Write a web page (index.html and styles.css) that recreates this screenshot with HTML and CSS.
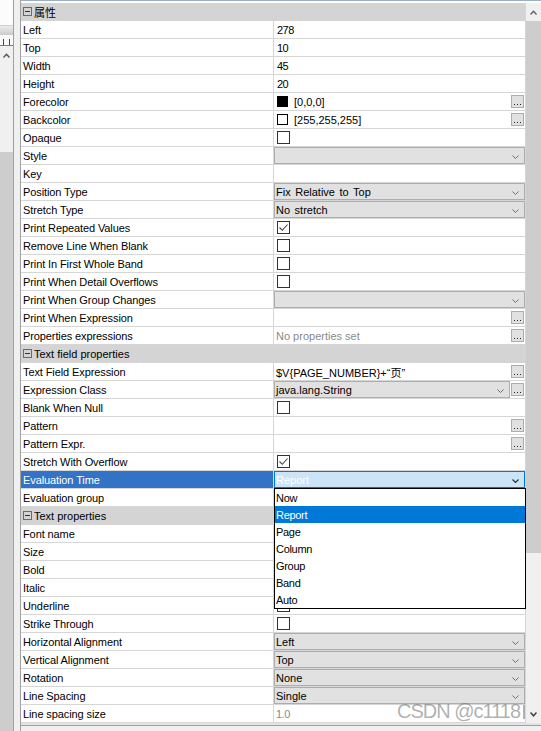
FILE: index.html
```html
<!DOCTYPE html>
<html>
<head>
<meta charset="utf-8">
<link rel="stylesheet" href="styles.css">
</head>
<body>
<div class="side">
  <div class="side-top"></div>
  <div class="side-band"></div>
  <div class="side-ruler"><span class="tick"></span><span class="tick"></span></div>
  <div class="side-arrow"><svg width="7" height="5" viewBox="0 0 7 5"><path d="M0.5 4.5 3.5 1.2 6.5 4.5" fill="none" stroke="#555" stroke-width="1.4"/></svg></div>
  <div class="side-thumb"></div>
</div>
<div class="split"></div>
<div class="panel">
  <div class="panel-top"></div>
  <div class="body-row">
    <div class="grid">
      <div class="row hdr"><span class="minus"></span><span class="cjk">属性</span></div>
      <div class="row"><div class="name">Left</div><div class="val"><span class="num">278</span></div></div>
      <div class="row"><div class="name">Top</div><div class="val"><span class="num">10</span></div></div>
      <div class="row"><div class="name">Width</div><div class="val"><span class="num">45</span></div></div>
      <div class="row"><div class="name">Height</div><div class="val"><span class="num">20</span></div></div>
      <div class="row"><div class="name">Forecolor</div><div class="val"><span class="sw black"></span><span class="swt">[0,0,0]</span><span class="btn"></span></div></div>
      <div class="row"><div class="name">Backcolor</div><div class="val"><span class="sw"></span><span class="swt">[255,255,255]</span><span class="btn"></span></div></div>
      <div class="row"><div class="name">Opaque</div><div class="val"><span class="cb"></span></div></div>
      <div class="row"><div class="name">Style</div><div class="val"><div class="combo"><span></span><svg class="chev" width="7" height="4" viewBox="0 0 7 4"><path d="M0.5 0.5 3.5 3.5 6.5 0.5" fill="none" stroke="#6d6d6d"/></svg></div></div></div>
      <div class="row"><div class="name">Key</div><div class="val"></div></div>
      <div class="row"><div class="name">Position Type</div><div class="val"><div class="combo"><span>Fix Relative to Top</span><svg class="chev" width="7" height="4" viewBox="0 0 7 4"><path d="M0.5 0.5 3.5 3.5 6.5 0.5" fill="none" stroke="#6d6d6d"/></svg></div></div></div>
      <div class="row"><div class="name">Stretch Type</div><div class="val"><div class="combo"><span>No stretch</span><svg class="chev" width="7" height="4" viewBox="0 0 7 4"><path d="M0.5 0.5 3.5 3.5 6.5 0.5" fill="none" stroke="#6d6d6d"/></svg></div></div></div>
      <div class="row"><div class="name">Print Repeated Values</div><div class="val"><span class="cb"><svg width="11" height="11" viewBox="0 0 11 11"><path d="M1.5 5.5 4.3 8.3 9.5 2.5" fill="none" stroke="#444" stroke-width="1.1"/></svg></span></div></div>
      <div class="row"><div class="name">Remove Line When Blank</div><div class="val"><span class="cb"></span></div></div>
      <div class="row"><div class="name">Print In First Whole Band</div><div class="val"><span class="cb"></span></div></div>
      <div class="row"><div class="name">Print When Detail Overflows</div><div class="val"><span class="cb"></span></div></div>
      <div class="row"><div class="name">Print When Group Changes</div><div class="val"><div class="combo"><span></span><svg class="chev" width="7" height="4" viewBox="0 0 7 4"><path d="M0.5 0.5 3.5 3.5 6.5 0.5" fill="none" stroke="#6d6d6d"/></svg></div></div></div>
      <div class="row"><div class="name">Print When Expression</div><div class="val"><span class="btn"></span></div></div>
      <div class="row"><div class="name">Properties expressions</div><div class="val"><span class="txt gray">No properties set</span><span class="btn"></span></div></div>
      <div class="row hdr"><span class="minus"></span><span>Text field properties</span></div>
      <div class="row"><div class="name">Text Field Expression</div><div class="val"><span class="txt cjkv">$V{PAGE_NUMBER}+“页”</span><span class="btn"></span></div></div>
      <div class="row"><div class="name">Expression Class</div><div class="val"><div class="combo short"><span class="plain">java.lang.String</span><svg class="chev" width="7" height="4" viewBox="0 0 7 4"><path d="M0.5 0.5 3.5 3.5 6.5 0.5" fill="none" stroke="#6d6d6d"/></svg></div><span class="btn"></span></div></div>
      <div class="row"><div class="name">Blank When Null</div><div class="val"><span class="cb"></span></div></div>
      <div class="row"><div class="name">Pattern</div><div class="val"><span class="btn"></span></div></div>
      <div class="row"><div class="name">Pattern Expr.</div><div class="val"><span class="btn"></span></div></div>
      <div class="row"><div class="name">Stretch With Overflow</div><div class="val"><span class="cb"><svg width="11" height="11" viewBox="0 0 11 11"><path d="M1.5 5.5 4.3 8.3 9.5 2.5" fill="none" stroke="#444" stroke-width="1.1"/></svg></span></div></div>
      <div class="row"><div class="name sel">Evaluation Time</div><div class="val"><div class="combo focus"><span class="plain">Report</span><svg class="chev" width="7" height="4" viewBox="0 0 7 4"><path d="M0.5 0.5 3.5 3.5 6.5 0.5" fill="none" stroke="#333" stroke-width="1.2"/></svg></div></div></div>
      <div class="row"><div class="name">Evaluation group</div><div class="val"></div></div>
      <div class="row hdr"><span class="minus"></span><span>Text properties</span></div>
      <div class="row"><div class="name">Font name</div><div class="val"></div></div>
      <div class="row"><div class="name">Size</div><div class="val"></div></div>
      <div class="row"><div class="name">Bold</div><div class="val"><span class="cb"></span></div></div>
      <div class="row"><div class="name">Italic</div><div class="val"><span class="cb"></span></div></div>
      <div class="row"><div class="name">Underline</div><div class="val"><span class="cb"></span></div></div>
      <div class="row"><div class="name">Strike Through</div><div class="val"><span class="cb"></span></div></div>
      <div class="row"><div class="name">Horizontal Alignment</div><div class="val"><div class="combo"><span>Left</span><svg class="chev" width="7" height="4" viewBox="0 0 7 4"><path d="M0.5 0.5 3.5 3.5 6.5 0.5" fill="none" stroke="#6d6d6d"/></svg></div></div></div>
      <div class="row"><div class="name">Vertical Alignment</div><div class="val"><div class="combo"><span>Top</span><svg class="chev" width="7" height="4" viewBox="0 0 7 4"><path d="M0.5 0.5 3.5 3.5 6.5 0.5" fill="none" stroke="#6d6d6d"/></svg></div></div></div>
      <div class="row"><div class="name">Rotation</div><div class="val"><div class="combo"><span>None</span><svg class="chev" width="7" height="4" viewBox="0 0 7 4"><path d="M0.5 0.5 3.5 3.5 6.5 0.5" fill="none" stroke="#6d6d6d"/></svg></div></div></div>
      <div class="row"><div class="name">Line Spacing</div><div class="val"><div class="combo"><span>Single</span><svg class="chev" width="7" height="4" viewBox="0 0 7 4"><path d="M0.5 0.5 3.5 3.5 6.5 0.5" fill="none" stroke="#6d6d6d"/></svg></div></div></div>
      <div class="row"><div class="name">Line spacing size</div><div class="val"><span class="txt gray num">1.0</span></div></div>
    </div>
    <div class="sb">
      <div class="sb-up"><svg width="7" height="5" viewBox="0 0 7 5"><path d="M0.5 4.5 3.5 1.2 6.5 4.5" fill="none" stroke="#606060" stroke-width="1.4"/></svg></div>
      <div class="sb-thumb"></div>
      <div class="sb-track"></div>
      <div class="sb-down"><svg width="7" height="5" viewBox="0 0 7 5"><path d="M0.5 0.5 3.5 3.8 6.5 0.5" fill="none" stroke="#404040" stroke-width="1.5"/></svg></div>
    </div>
  </div>
  <div class="gapline"></div>
  <div class="foot"></div>
</div>

<div class="drop">
  <div class="opt">Now</div>
  <div class="opt on">Report</div>
  <div class="opt">Page</div>
  <div class="opt">Column</div>
  <div class="opt">Group</div>
  <div class="opt">Band</div>
  <div class="opt">Auto</div>
</div>

<div class="wm"><span>CSDN @c1118</span><span class="wm-cut"></span></div>
</body>
</html>
```

FILE: styles.css
```css
html, body {
  margin: 0;
  padding: 0;
}
body {
  width: 541px;
  height: 731px;
  overflow: hidden;
  background: #f0f0f0;
  font-family: "Liberation Sans", Arial, "Noto Sans CJK SC", sans-serif;
  font-size: 11px;
  color: #000;
  position: relative;
  display: flex;
}

/* left neighbour strip */
.side {
  width: 13px;
  display: flex;
  flex-direction: column;
}
.side-top {
  height: 26px;
  box-sizing: border-box;
  background: #fcfcfc;
  border-bottom: 1px solid #d0d0d0;
}
.side-band {
  height: 9px;
  background: linear-gradient(#ececec, #cbcbcb);
}
.side-ruler {
  height: 11px;
  box-sizing: border-box;
  background: #fafafa;
  border-bottom: 1px solid #7a7a7a;
  display: flex;
  align-items: flex-end;
  justify-content: space-around;
  padding: 0 1px;
}
.tick {
  width: 1px;
  height: 6px;
  background: #444;
}
.side-arrow {
  height: 106px;
  background: #f0f0f0;
  display: flex;
  justify-content: center;
  align-items: flex-start;
  padding-top: 7px;
  box-sizing: border-box;
}
.side-thumb {
  flex: 1;
  background: #cdcdcd;
}
.split {
  width: 7px;
  box-sizing: border-box;
  border-left: 1px solid #a0a0a0;
  background: #f0f0f0;
}

/* property panel */
.panel {
  width: 521px;
  box-sizing: border-box;
  border-left: 1px solid #a0a0a0;
  display: flex;
  flex-direction: column;
}
.panel-top {
  height: 3px;
  box-sizing: border-box;
  border-top: 1px solid #9caec2;
  background: #fff;
}
.body-row {
  display: flex;
  height: 720px;
}
.grid {
  width: 505px;
  display: flex;
  flex-direction: column;
}
.row {
  display: flex;
  height: 18px;
  flex: none;
  box-sizing: border-box;
  border-bottom: 1px solid #d6d6d6;
}
.name {
  width: 253px;
  box-sizing: border-box;
  border-right: 1px solid #d6d6d6;
  padding-left: 2px;
  display: flex;
  align-items: center;
  background: #fff;
  letter-spacing: -0.1px;
  white-space: nowrap;
}
.name.sel {
  background: #3373c5;
  color: #fff;
}
.val {
  width: 252px;
  box-sizing: border-box;
  border-right: 1px solid #d6d6d6;
  background: #fff;
  display: flex;
  align-items: center;
  white-space: nowrap;
}
.row.hdr {
  background: #d4d4d4;
  border-bottom-color: #d4d4d4;
  border-right: 1px solid #d6d6d6;
  align-items: center;
  padding-left: 2px;
}
.minus {
  width: 9px;
  height: 9px;
  box-sizing: border-box;
  border: 1px solid #6a6a6a;
  margin-right: 2px;
  display: flex;
  align-items: center;
  justify-content: center;
}
.minus::before {
  content: "";
  width: 5px;
  height: 1px;
  background: #333;
}
.cjk {
  font-family: "Noto Sans CJK SC", "Liberation Sans", sans-serif;
  font-size: 11px;
}
.num {
  padding-left: 3px;
  letter-spacing: -0.5px;
}
.txt {
  padding-left: 2px;
}
.cjkv {
  font-family: "Liberation Sans", "Noto Sans CJK SC", sans-serif;
}
.gray {
  color: #8a8a8a;
}
.sw {
  width: 11px;
  height: 11px;
  box-sizing: border-box;
  border: 1px solid #000;
  background: #fff;
  margin-left: 3px;
  flex: none;
}
.sw.black {
  background: #000;
}
.swt {
  margin-left: 6px;
}
.cb {
  width: 13px;
  height: 13px;
  box-sizing: border-box;
  border: 1px solid #333;
  background: #fff;
  margin-left: 3px;
  flex: none;
  display: flex;
}
.btn {
  width: 13px;
  height: 13px;
  box-sizing: border-box;
  border: 1px solid #adadad;
  background: #e1e1e1;
  margin-left: auto;
  margin-right: 1px;
  position: relative;
  flex: none;
}
.btn::after {
  content: "";
  position: absolute;
  left: 2px;
  top: 8px;
  width: 1px;
  height: 1px;
  background: #222;
  box-shadow: 3px 0 #222, 6px 0 #222;
}
.combo {
  width: 251px;
  height: 17px;
  box-sizing: border-box;
  border: 1px solid #adadad;
  background: #e1e1e1;
  display: flex;
  align-items: center;
  justify-content: space-between;
  padding-left: 1px;
  word-spacing: 1.5px;
  flex: none;
}
.combo.short {
  width: 236px;
}
.combo .plain {
  word-spacing: 0;
}
.combo.focus {
  background: #cce4f7;
  border-color: #0078d7;
  color: #fff;
}
.chev {
  margin-right: 5px;
  margin-top: 3px;
  flex: none;
}

/* scrollbar */
.sb {
  width: 15px;
  display: flex;
  flex-direction: column;
  background: #f0f0f0;
}
.sb-up {
  height: 18px;
  display: flex;
  align-items: center;
  justify-content: center;
  flex: none;
}
.sb-thumb {
  height: 532px;
  background: #cdcdcd;
  flex: none;
}
.sb-track {
  flex: 1;
}
.sb-down {
  height: 17px;
  display: flex;
  align-items: center;
  justify-content: center;
  flex: none;
}

.gapline {
  height: 2px;
  background: #e4e4e4;
}
.foot {
  flex: 1;
  border-top: 1px solid #a0a0a0;
  background: #f0f0f0;
}

/* open dropdown list */
.drop {
  position: absolute;
  left: 274px;
  top: 488px;
  width: 252px;
  height: 121px;
  box-sizing: border-box;
  border: 1px solid #000;
  background: #fff;
}
.opt {
  height: 17px;
  line-height: 18px;
  padding-left: 1px;
  letter-spacing: -0.3px;
}
.opt.on {
  background: #0078d7;
  color: #fff;
}

/* watermark */
.wm {
  position: absolute;
  left: 397px;
  top: 699px;
  height: 24px;
  display: flex;
  align-items: center;
  font-size: 20px;
  line-height: 24px;
  letter-spacing: -1px;
  color: rgba(110, 110, 110, 0.55);
  white-space: nowrap;
}
.wm-cut {
  width: 2px;
  height: 14px;
  margin-left: 3px;
  margin-top: 1px;
  background: rgba(110, 110, 110, 0.55);
}
```
